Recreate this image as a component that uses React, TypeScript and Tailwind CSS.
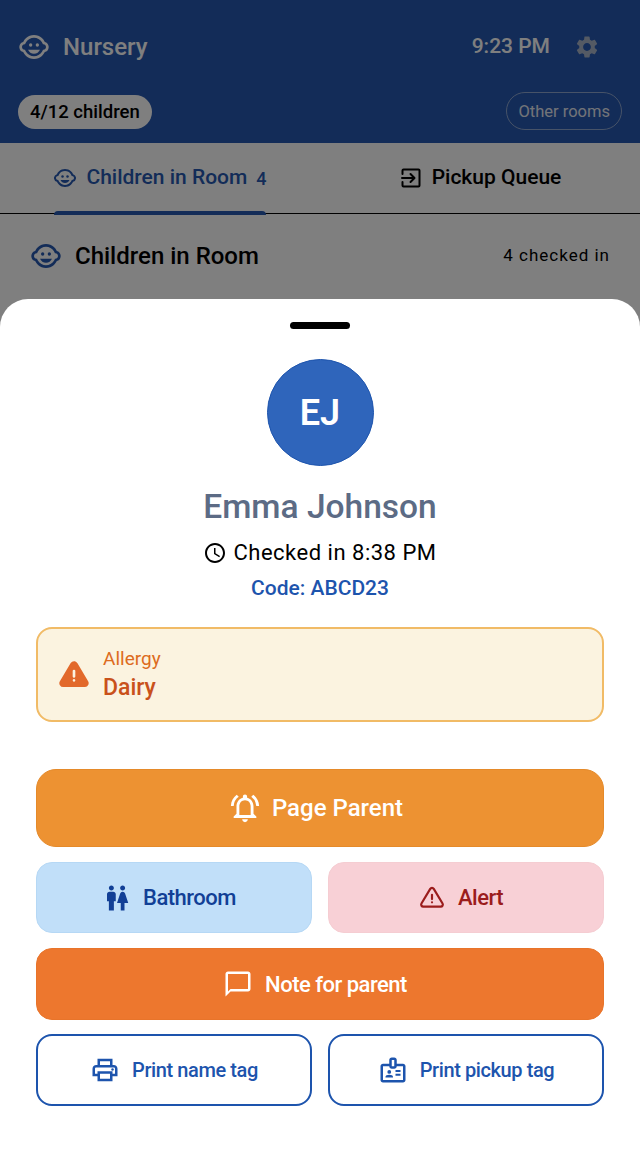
import { MdOutlineChildCare, MdSettings, MdOutlineNotificationsActive, MdWc, MdOutlineChatBubbleOutline, MdOutlinePrint, MdOutlineBadge, MdOutlineAccessTime } from "react-icons/md";
import { TbAlertTriangle, TbAlertTriangleFilled } from "react-icons/tb";

const QueueIcon = () => (
  <svg viewBox="0 0 24 24" fill="none" stroke="currentColor" strokeWidth="2" strokeLinecap="round" strokeLinejoin="round" className="size-[24px]">
    <path d="M3.5 8V4.5a1 1 0 0 1 1-1h15a1 1 0 0 1 1 1v15a1 1 0 0 1-1 1h-15a1 1 0 0 1-1-1V16" />
    <path d="M3 12h12M11.5 8l4 4-4 4" />
  </svg>
);

const App = () => {
  return (
    <div className="relative h-[1152px] w-[640px] overflow-hidden bg-white font-['Roboto',sans-serif]">
      {/* page behind the sheet */}
      <header className="h-[143px] bg-[#2658b0] px-[18px]">
        <div className="flex h-[92px] items-center pt-[2px]">
          <MdOutlineChildCare className="size-[32px] text-white" />
          <span className="ml-[13px] text-[24px] font-medium text-white">Nursery</span>
          <span className="ml-auto text-[21px] font-medium text-white">9:23 PM</span>
          <MdSettings className="ml-[24px] mr-[22px] size-[26px] text-[#a8b4c8]" />
        </div>
        <div className="flex items-start justify-between">
          <span className="mt-[3px] rounded-full bg-white px-[12px] py-[6px] text-[18.5px] font-medium leading-[22px] text-black">4/12 children</span>
          <span className="rounded-full border border-[#8ea6d0] px-[11px] pt-[1px] text-[16.5px] leading-[35px] text-[#e4e8f0]">Other rooms</span>
        </div>
      </header>

      <nav className="flex h-[71px] border-b-[1.5px] border-black">
        <div className="relative flex flex-1 items-center justify-center text-[#2658b0]">
          <MdOutlineChildCare className="size-[24px]" />
          <span className="ml-[9px] text-[21px] font-medium">Children in Room</span>
          <span className="ml-[9px] text-[18px] font-medium">4</span>
          <div className="absolute bottom-[-2px] left-[54px] h-[4px] w-[212px] rounded-t bg-[#2658b0]" />
        </div>
        <div className="flex flex-1 items-center justify-center text-black">
          <QueueIcon />
          <span className="ml-[9px] text-[21px] font-medium">Pickup Queue</span>
        </div>
      </nav>

      <div className="flex h-[83px] items-center justify-between px-[30px]">
        <div className="flex items-center">
          <MdOutlineChildCare className="size-[32px] text-[#2658b0]" />
          <span className="ml-[13px] text-[24px] font-medium text-black">Children in Room</span>
        </div>
        <span className="text-[17px] tracking-[1px] text-black">4 checked in</span>
      </div>

      {/* dim layer */}
      <div className="absolute inset-0 bg-black/50" />

      {/* bottom sheet */}
      <div className="absolute inset-x-0 bottom-0 top-[299px] rounded-t-[28px] bg-white px-[36px]">
        <div className="mx-auto mt-[23px] h-[7px] w-[60px] rounded-full bg-black" />
        <div className="mx-auto mt-[30px] flex size-[107px] items-center justify-center rounded-full border border-[#1d54ad] bg-[#2f65bb] text-[36px] font-semibold text-white">EJ</div>
        <div className="mt-[19px] text-center text-[33.5px] font-medium leading-[44px] text-[#5c6b85]">Emma Johnson</div>
        <div className="mt-[9px] flex items-center justify-center text-black">
          <MdOutlineAccessTime className="size-[24px]" />
          <span className="ml-[6px] text-[22px] leading-[30px] tracking-[0.5px]">Checked in 8:38 PM</span>
        </div>
        <div className="mt-[6px] text-center text-[21px] font-medium leading-[28px] text-[#1d54ad]">Code: ABCD23</div>

        <div className="mt-[25px] flex h-[95px] items-center rounded-[16px] border-2 border-[#f1bb66] bg-[#fbf3e0] pl-[20px]">
          <TbAlertTriangleFilled className="size-[32px] text-[#e2692b]" />
          <div className="ml-[13px]">
            <div className="text-[19px] leading-[24px] text-[#dd6b20]">Allergy</div>
            <div className="mt-[2px] text-[23px] font-medium leading-[30px] text-[#c9511b]">Dairy</div>
          </div>
        </div>

        <button className="mt-[47px] flex h-[78px] w-full items-center justify-center rounded-[20px] border border-[#e58a2a] bg-[#ed9232] pr-[9px] text-[24px] font-medium text-white">
          <MdOutlineNotificationsActive className="size-[34px]" />
          <span className="ml-[10px]">Page Parent</span>
        </button>

        <div className="mt-[15px] grid grid-cols-2 gap-[16px]">
          <button className="flex h-[71px] items-center justify-center rounded-[16px] border border-[#b6d8f5] bg-[#c1dff9] pr-[10px] text-[22px] font-medium tracking-[-0.5px] text-[#123f96]">
            <MdWc className="size-[30px]" />
            <span className="ml-[11px]">Bathroom</span>
          </button>
          <button className="flex h-[71px] items-center justify-center rounded-[16px] border border-[#f5cdd2] bg-[#f8d0d6] pr-[10px] text-[22px] font-medium tracking-[-0.5px] text-[#9b1c1c]">
            <TbAlertTriangle className="size-[26px]" />
            <span className="ml-[13px]">Alert</span>
          </button>
        </div>

        <button className="mt-[15px] flex h-[72px] w-full items-center justify-center rounded-[16px] border border-[#e8742a] bg-[#ed772e] pr-[10px] text-[22px] font-medium tracking-[-0.5px] text-white">
          <MdOutlineChatBubbleOutline className="size-[30px]" />
          <span className="ml-[12px]">Note for parent</span>
        </button>

        <div className="mt-[14px] grid grid-cols-2 gap-[16px]">
          <button className="flex h-[72px] items-center justify-center rounded-[16px] border-2 border-[#1d54ad] bg-white text-[20px] font-medium tracking-[-0.4px] text-[#1d54ad]">
            <MdOutlinePrint className="size-[30px]" />
            <span className="ml-[12px]">Print name tag</span>
          </button>
          <button className="flex h-[72px] items-center justify-center rounded-[16px] border-2 border-[#1d54ad] bg-white text-[20px] font-medium tracking-[-0.4px] text-[#1d54ad]">
            <MdOutlineBadge className="size-[30px]" />
            <span className="ml-[12px]">Print pickup tag</span>
          </button>
        </div>
      </div>
    </div>
  );
};

export default App;
